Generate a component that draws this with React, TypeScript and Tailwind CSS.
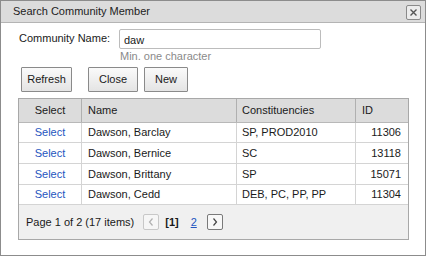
import React from 'react';

type Member = {
    name: string;
    constituencies: string;
    id: number;
};

const members: Member[] = [
    { name: 'Dawson, Barclay', constituencies: 'SP, PROD2010', id: 11306 },
    { name: 'Dawson, Bernice', constituencies: 'SC', id: 13118 },
    { name: 'Dawson, Brittany', constituencies: 'SP', id: 15071 },
    { name: 'Dawson, Cedd', constituencies: 'DEB, PC, PP, PP', id: 11304 },
];

const rowHeights = ['h-[20px]', 'h-[21px]', 'h-[21px]', 'h-[20px]'];

function Chevron({ dir, color }: { dir: 'left' | 'right'; color: string }) {
    return (
        <svg width="8" height="10" viewBox="0 0 8 10" fill="none">
            {dir === 'left' ? (
                <path d="M5.5 1.5 L2.5 5 L5.5 8.5" stroke={color} strokeWidth="1.2" />
            ) : (
                <path d="M2.5 1.5 L5.5 5 L2.5 8.5" stroke={color} strokeWidth="1.2" />
            )}
        </svg>
    );
}

export default function App() {
    return (
        <div
            className="w-[426px] h-[256px] bg-white border border-[#8c8c8c] flex flex-col text-[11px] leading-[13px] text-[#1a1a1a]"
            style={{ fontFamily: '"Liberation Sans", Arial, sans-serif' }}
        >
            {/* title bar */}
            <div className="h-[22px] shrink-0 bg-[#dcdcdc] border-b border-[#b4b4b4] flex items-center justify-between pl-[12px] pr-[4px]">
                <span className="text-[#222]">Search Community Member</span>
                <div className="w-[15px] h-[15px] mt-[1px] rounded-[2px] border border-[#8a8a8a] bg-[#ececec] flex items-center justify-center">
                    <svg width="9" height="9" viewBox="0 0 9 9">
                        <path d="M1.5 1.5 L7.5 7.5 M7.5 1.5 L1.5 7.5" stroke="#555" strokeWidth="1.4" />
                    </svg>
                </div>
            </div>

            {/* search form */}
            <div className="flex pl-[18px] pt-[6px]">
                <label className="w-[100px] pt-[3px]">Community Name:</label>
                <div className="flex flex-col">
                    <input
                        defaultValue="daw"
                        className="w-[202px] h-[20px] border border-[#bcbcbc] rounded-[2px] px-[4px] pt-[2px] text-[11px] outline-none"
                    />
                    <span className="text-[#8a8a8a] mt-[1px] pl-[1px]">Min. one character</span>
                </div>
            </div>

            <div className="flex mt-[4px] pl-[20px]">
                <button className="w-[51px] h-[25px] border border-[#8a8a8a] bg-gradient-to-b from-[#fafafa] to-[#e4e4e4] rounded-[1px]">Refresh</button>
                <button className="w-[50px] h-[25px] ml-[16px] border border-[#8a8a8a] bg-gradient-to-b from-[#fafafa] to-[#e4e4e4] rounded-[1px]">Close</button>
                <button className="w-[44px] h-[25px] ml-[6px] border border-[#8a8a8a] bg-gradient-to-b from-[#fafafa] to-[#e4e4e4] rounded-[1px]">New</button>
            </div>

            {/* results grid */}
            <div className="ml-[17px] mt-[6px] w-[391px] border border-[#a8a8a8]">
                <div className="h-[24px] bg-[#dcdcdc] flex items-center border-b border-[#b8b8b8]">
                    <div className="w-[63px] h-full flex items-center justify-center border-r border-[#b0b0b0]">Select</div>
                    <div className="w-[155px] h-full flex items-center pl-[6px] border-r border-[#b0b0b0]">Name</div>
                    <div className="w-[119px] h-full flex items-center pl-[5px] border-r border-[#b0b0b0]">Constituencies</div>
                    <div className="flex-1 h-full flex items-center pl-[6px]">ID</div>
                </div>
                {members.map((m, i) => (
                    <div key={m.id} className={`${rowHeights[i]} flex items-center border-b border-[#d4d4d4]`}>
                        <div className="w-[63px] h-full flex items-center justify-center border-r border-[#d4d4d4] text-[#2456c0]">Select</div>
                        <div className="w-[155px] h-full flex items-center pl-[6px] border-r border-[#d4d4d4]">{m.name}</div>
                        <div className="w-[119px] h-full flex items-center pl-[5px] border-r border-[#d4d4d4]">{m.constituencies}</div>
                        <div className="flex-1 h-full flex items-center justify-end pr-[7px]">{m.id}</div>
                    </div>
                ))}
                <div className="h-[34px] bg-[#f0f0f0] flex items-center pl-[7px]">
                    <span>Page 1 of 2 (17 items)</span>
                    <div className="ml-[9px] w-[16px] h-[16px] rounded-[2px] border border-[#c8c8c8] bg-[#f6f6f6] flex items-center justify-center">
                        <Chevron dir="left" color="#b0b0b0" />
                    </div>
                    <span className="ml-[6px] font-bold">[1]</span>
                    <span className="ml-[12px] text-[#2456c0] underline">2</span>
                    <div className="ml-[10px] w-[16px] h-[16px] rounded-[2px] border border-[#7a7a7a] bg-[#f8f8f8] flex items-center justify-center">
                        <Chevron dir="right" color="#444" />
                    </div>
                </div>
            </div>
        </div>
    );
}
